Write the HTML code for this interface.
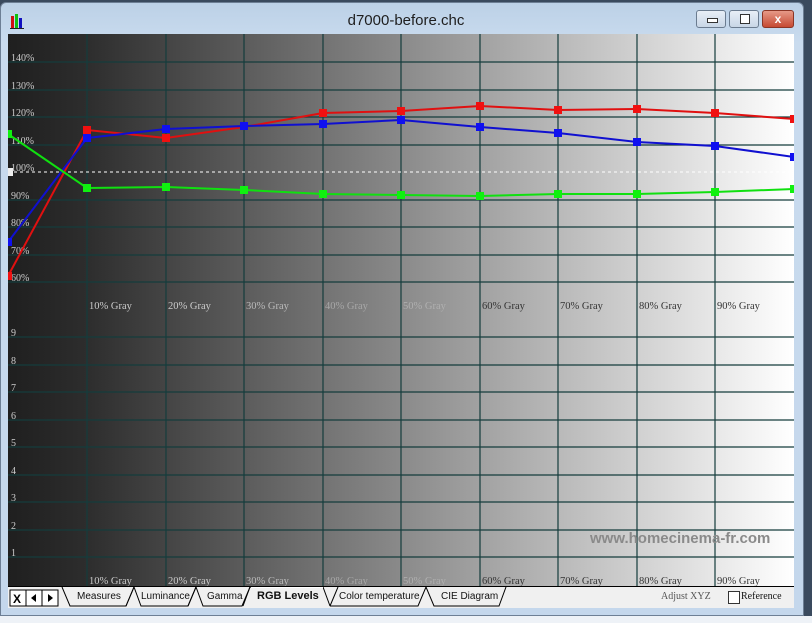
<!DOCTYPE html>
<html><head><meta charset="utf-8"><style>
html,body{margin:0;padding:0;width:812px;height:623px;overflow:hidden;background:#3a4a5e;font-family:"Liberation Sans",sans-serif}
#win{position:absolute;left:0;top:2px;width:804px;height:614px;background:linear-gradient(#bcd1e7,#c9dbee 40px,#c4d7ec);border-radius:6px 6px 0 0;border:1px solid #6d7f95;box-sizing:border-box}
#title{position:absolute;left:0;width:812px;top:12px;text-align:center;font-size:15px;color:#1e1e1e}
.btn{position:absolute;top:10px;height:18px;border:1px solid #6b7c90;border-radius:3px;background:linear-gradient(#e8eff7,#c8d6e6);box-sizing:border-box}
#below{position:absolute;left:0;top:616px;width:812px;height:7px;background:#eef2f7}
svg text{font-family:"Liberation Serif",serif}
#tabs{position:absolute;left:8px;top:586px;width:786px;height:22px;background:#f0f0f0;border-top:1px solid #000;box-sizing:border-box}
.tab{position:absolute;top:4px;font-size:10px;color:#111}
</style></head><body>
<div id="win"></div>
<div id="title">d7000-before.chc</div>
<svg style="position:absolute;left:9px;top:12px" width="18" height="18"><rect x="2" y="4" width="3" height="12" fill="#d01010"/><rect x="6" y="2" width="3" height="14" fill="#10c010"/><rect x="10" y="6" width="3" height="10" fill="#1010c0"/><rect x="1" y="16" width="14" height="1" fill="#222"/></svg>
<div class="btn" style="left:696px;width:30px"><div style="position:absolute;left:10px;top:7px;width:9px;height:3px;border:1px solid #333;background:#fff"></div></div>
<div class="btn" style="left:729px;width:30px"><div style="position:absolute;left:10px;top:3px;width:8px;height:8px;border:1px solid #333;background:#fff"></div></div>
<div class="btn" style="left:762px;width:32px;background:linear-gradient(#e69a88,#c64a32);border-color:#8b3525;color:#fff;font-weight:bold;font-size:12px;text-align:center;line-height:16px">x</div>
<svg style="position:absolute;left:8px;top:34px" width="786" height="552" viewBox="8 34 786 552">
<defs><linearGradient id="g" x1="8" x2="794" gradientUnits="userSpaceOnUse"><stop offset="0" stop-color="#1f1f1f"/><stop offset="0.1" stop-color="#2d2d2d"/><stop offset="0.5" stop-color="#8a8a8a"/><stop offset="1" stop-color="#ffffff"/></linearGradient></defs>
<rect x="8" y="34" width="786" height="552" fill="url(#g)"/>
<g stroke="#143c3c" stroke-width="1.2">
<line x1="87" y1="34" x2="87" y2="586"/><line x1="166" y1="34" x2="166" y2="586"/><line x1="244" y1="34" x2="244" y2="586"/><line x1="323" y1="34" x2="323" y2="586"/><line x1="401" y1="34" x2="401" y2="586"/><line x1="480" y1="34" x2="480" y2="586"/><line x1="558" y1="34" x2="558" y2="586"/><line x1="637" y1="34" x2="637" y2="586"/><line x1="715" y1="34" x2="715" y2="586"/>
<line x1="8" y1="62" x2="794" y2="62"/><line x1="8" y1="90" x2="794" y2="90"/><line x1="8" y1="117" x2="794" y2="117"/><line x1="8" y1="145" x2="794" y2="145"/><line x1="8" y1="200" x2="794" y2="200"/><line x1="8" y1="227" x2="794" y2="227"/><line x1="8" y1="255" x2="794" y2="255"/><line x1="8" y1="282" x2="794" y2="282"/>
<line x1="8" y1="337" x2="794" y2="337"/><line x1="8" y1="365" x2="794" y2="365"/><line x1="8" y1="392" x2="794" y2="392"/><line x1="8" y1="420" x2="794" y2="420"/><line x1="8" y1="447" x2="794" y2="447"/><line x1="8" y1="475" x2="794" y2="475"/><line x1="8" y1="502" x2="794" y2="502"/><line x1="8" y1="530" x2="794" y2="530"/><line x1="8" y1="557" x2="794" y2="557"/>
</g>
<line x1="8" y1="172" x2="794" y2="172" stroke="#fff" stroke-dasharray="3,3"/>
<rect x="8" y="168" width="5" height="8" fill="#eee"/>
<g font-size="10" fill="#ccc">
<text x="11" y="61">140%</text><text x="11" y="89">130%</text><text x="11" y="116">120%</text><text x="11" y="144">110%</text><text x="11" y="171">100%</text><text x="11" y="199">90%</text><text x="11" y="226">80%</text><text x="11" y="254">70%</text><text x="11" y="281">60%</text>
<text x="11" y="336">9</text><text x="11" y="364">8</text><text x="11" y="391">7</text><text x="11" y="419">6</text><text x="11" y="446">5</text><text x="11" y="474">4</text><text x="11" y="501">3</text><text x="11" y="529">2</text><text x="11" y="556">1</text>
</g>
<g font-size="10.5">
<text x="89" y="309" fill="#ccc">10% Gray</text><text x="168" y="309" fill="#ccc">20% Gray</text><text x="246" y="309" fill="#bbb">30% Gray</text><text x="325" y="309" fill="#a8a8a8">40% Gray</text><text x="403" y="309" fill="#b0b0b0">50% Gray</text><text x="482" y="309" fill="#333">60% Gray</text><text x="560" y="309" fill="#333">70% Gray</text><text x="639" y="309" fill="#333">80% Gray</text><text x="717" y="309" fill="#333">90% Gray</text>
<text x="89" y="584" fill="#ccc">10% Gray</text><text x="168" y="584" fill="#ccc">20% Gray</text><text x="246" y="584" fill="#bbb">30% Gray</text><text x="325" y="584" fill="#a8a8a8">40% Gray</text><text x="403" y="584" fill="#b0b0b0">50% Gray</text><text x="482" y="584" fill="#333">60% Gray</text><text x="560" y="584" fill="#333">70% Gray</text><text x="639" y="584" fill="#333">80% Gray</text><text x="717" y="584" fill="#333">90% Gray</text>
</g>
<text x="590" y="543" style="font-family:'Liberation Sans',sans-serif;font-weight:bold;font-size:15px" fill="#8a8a8a">www.homecinema-fr.com</text>
<g stroke-width="2" fill="none">
<polyline stroke="#e01010" points="8,276 87,130 166,138 244,127 323,113 401,111 480,106 558,110 637,109 715,113 794,119"/>
<polyline stroke="#1010d0" points="8,242 87,138 166,129 244,126 323,124 401,120 480,127 558,133 637,142 715,146 794,157"/>
<polyline stroke="#10e010" points="8,134 87,188 166,187 244,190 323,194 401,195 480,196 558,194 637,194 715,192 794,189"/>
</g>
<g fill="#f01010"><rect x="83" y="126" width="8" height="8"/><rect x="162" y="134" width="8" height="8"/><rect x="319" y="109" width="8" height="8"/><rect x="397" y="107" width="8" height="8"/><rect x="476" y="102" width="8" height="8"/><rect x="554" y="106" width="8" height="8"/><rect x="633" y="105" width="8" height="8"/><rect x="711" y="109" width="8" height="8"/><rect x="790" y="115" width="8" height="8"/><rect x="4" y="272" width="8" height="8"/></g>
<g fill="#1010f0"><rect x="83" y="134" width="8" height="8"/><rect x="162" y="125" width="8" height="8"/><rect x="240" y="122" width="8" height="8"/><rect x="319" y="120" width="8" height="8"/><rect x="397" y="116" width="8" height="8"/><rect x="476" y="123" width="8" height="8"/><rect x="554" y="129" width="8" height="8"/><rect x="633" y="138" width="8" height="8"/><rect x="711" y="142" width="8" height="8"/><rect x="790" y="153" width="8" height="8"/><rect x="4" y="238" width="8" height="8"/></g>
<g fill="#10f010"><rect x="83" y="184" width="8" height="8"/><rect x="162" y="183" width="8" height="8"/><rect x="240" y="186" width="8" height="8"/><rect x="319" y="190" width="8" height="8"/><rect x="397" y="191" width="8" height="8"/><rect x="476" y="192" width="8" height="8"/><rect x="554" y="190" width="8" height="8"/><rect x="633" y="190" width="8" height="8"/><rect x="711" y="188" width="8" height="8"/><rect x="790" y="185" width="8" height="8"/><rect x="4" y="130" width="8" height="8"/></g>
</svg>
<div id="tabs">
<svg width="786" height="21" style="position:absolute;left:0;top:0">
<rect x="2" y="3" width="16" height="16" fill="#fff" stroke="#000"/><rect x="18" y="3" width="16" height="16" fill="#fff" stroke="#000"/><rect x="34" y="3" width="16" height="16" fill="#fff" stroke="#000"/>
<text x="5" y="16" style="font-family:'Liberation Sans',sans-serif;font-size:12px;font-weight:bold">X</text>
<path d="M28 7 L23 11 L28 15Z M40 7 L45 11 L40 15Z" fill="#000"/>
<g stroke="#000" fill="none"><path d="M54 0 L62 19 L118 19 L126 0"/><path d="M118 19 L126 0 M126 0 L133 19 L180 19 L188 0"/><path d="M180 19 L188 0 L195 19 L234 19 L242 0"/><path d="M242 0 L235 19 M242 0 L315 0 L322 19 M322 19 L330 0"/><path d="M322 19 L410 19 L418 0 M418 0 L426 19 L491 19 L498 0"/></g>
<rect x="243" y="0" width="72" height="1" fill="#fff"/>
</svg>
<span class="tab" style="left:69px">Measures</span>
<span class="tab" style="left:133px">Luminance</span>
<span class="tab" style="left:199px">Gamma</span>
<span class="tab" style="left:249px;font-weight:bold;font-size:11px;top:3px">RGB Levels</span>
<span class="tab" style="left:331px">Color temperature</span>
<span class="tab" style="left:433px">CIE Diagram</span>
<span class="tab" style="left:653px;font-family:'Liberation Serif',serif;color:#555">Adjust XYZ</span>
<span style="position:absolute;left:720px;top:4px;width:10px;height:11px;border:1px solid #333;background:#fff"></span>
<span class="tab" style="left:733px;font-family:'Liberation Serif',serif">Reference</span>
</div>
<div id="below"></div>
</body></html>
